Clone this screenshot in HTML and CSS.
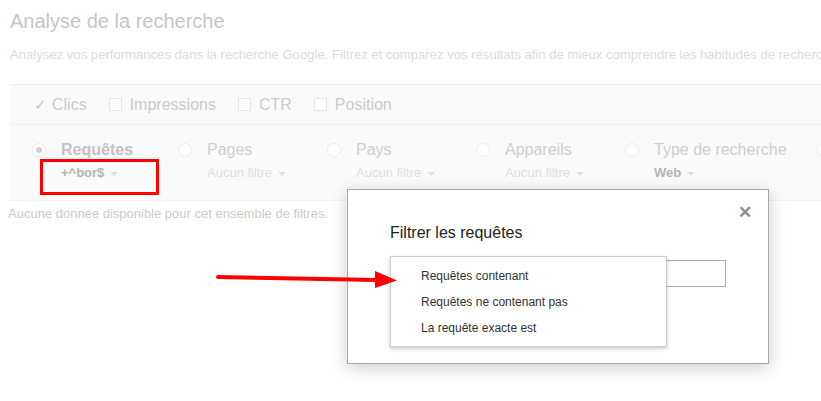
FILE: index.html
```html
<!DOCTYPE html>
<html lang="fr">
<head>
    <meta charset="UTF-8">
    <title>Analyse de la recherche</title>
    <link rel="stylesheet" href="styles.css">
</head>
<body>
    <div class="page">
        <h1>Analyse de la recherche</h1>
        <p class="desc">Analysez vos performances dans la recherche Google. Filtrez et comparez vos résultats afin de mieux comprendre les habitudes de recherche de vos utilisateurs.</p>

        <div class="metrics">
            <span class="metric"><span class="check">&#10003;</span>Clics</span>
            <span class="metric"><span class="box"></span>Impressions</span>
            <span class="metric"><span class="box"></span>CTR</span>
            <span class="metric"><span class="box"></span>Position</span>
        </div>

        <div class="dims">
            <div class="dim first">
                <span class="radio on"></span>
                <div>
                    <div class="dim-name bold">Requêtes</div>
                    <div class="dim-filter set">+^bor$ <span class="caret"></span></div>
                </div>
            </div>
            <div class="dim">
                <span class="radio"></span>
                <div>
                    <div class="dim-name">Pages</div>
                    <div class="dim-filter">Aucun filtre <span class="caret"></span></div>
                </div>
            </div>
            <div class="dim">
                <span class="radio"></span>
                <div>
                    <div class="dim-name">Pays</div>
                    <div class="dim-filter">Aucun filtre <span class="caret"></span></div>
                </div>
            </div>
            <div class="dim">
                <span class="radio"></span>
                <div>
                    <div class="dim-name">Appareils</div>
                    <div class="dim-filter">Aucun filtre <span class="caret"></span></div>
                </div>
            </div>
            <div class="dim">
                <span class="radio"></span>
                <div>
                    <div class="dim-name">Type de recherche</div>
                    <div class="dim-filter set">Web <span class="caret"></span></div>
                </div>
            </div>
            <div class="dim">
                <span class="radio"></span>
                <div>
                    <div class="dim-name">Dates</div>
                    <div class="dim-filter">Aucun filtre <span class="caret"></span></div>
                </div>
            </div>
        </div>

        <p class="empty">Aucune donnée disponible pour cet ensemble de filtres.</p>
    </div>

    <div class="dialog">
        <span class="close">&#10005;</span>
        <h2>Filtrer les requêtes</h2>
        <div class="field">
            <div class="input"></div>
            <ul class="menu">
                <li>Requêtes contenant</li>
                <li>Requêtes ne contenant pas</li>
                <li>La requête exacte est</li>
            </ul>
        </div>
    </div>

    <!-- annotation -->
    <div class="highlight"></div>
    <svg class="arrow" width="190" height="24" viewBox="0 0 190 24">
        <path d="M2 9 L162 12" stroke="#ff0000" stroke-width="4" stroke-linecap="round"/>
        <path d="M159 3 L181 12.5 L159 20 Z" fill="#ff0000"/>
    </svg>
</body>
</html>
```

FILE: styles.css
```css
body {
    margin: 0;
    font-family: "Liberation Sans", Arial, sans-serif;
    background: #fff;
    overflow: hidden;
}
.page {
    padding: 0 0 0 10px;
    white-space: nowrap;
}
h1 {
    margin: 9px 0 0 0;
    font-size: 20px;
    font-weight: normal;
    line-height: 24px;
    color: #c6c6c6;
}
.desc {
    margin: 14px 0 0 0;
    font-size: 13px;
    line-height: 16px;
    letter-spacing: 0.05px;
    color: #dcdcdc;
}
.metrics {
    margin-top: 21px;
    height: 39px;
    display: flex;
    align-items: center;
    gap: 22px;
    padding-left: 24px;
    background-color: #fafafa;
    border-top: 1px solid #f0f0f0;
    border-bottom: 1px solid #f0f0f0;
    font-size: 16px;
    color: #cbcbcb;
}
.metric {
    display: flex;
    align-items: center;
}
.check {
    font-size: 15px;
    margin-right: 5px;
    color: #c8c8c8;
}
.box {
    width: 11px;
    height: 11px;
    border: 1px solid #e6e6e6;
    background: #fff;
    margin-right: 8px;
}
.dims {
    display: flex;
    height: 75px;
    background-color: #fafafa;
    padding-left: 22px;
    border-bottom: 1px solid #f2f2f2;
}
.dim {
    flex: 0 0 auto;
    min-width: 149px;
    box-sizing: border-box;
    padding-right: 30px;
    display: flex;
    align-items: flex-start;
    gap: 15px;
    padding-top: 14px;
}
.dim.first {
    min-width: 146px;
}
.radio {
    width: 12px;
    height: 12px;
    border: 1px solid #ececec;
    border-radius: 50%;
    background: #fff;
    margin-top: 4px;
    position: relative;
    flex: none;
}
.radio.on::after {
    content: "";
    position: absolute;
    left: 3px;
    top: 3px;
    width: 6px;
    height: 6px;
    border-radius: 50%;
    background: #d0d0d0;
}
.dim-name {
    font-size: 16px;
    line-height: 20px;
    margin-top: 1px;
    color: #cfcfcf;
}
.dim-name.bold {
    font-weight: bold;
    color: #c2c2c2;
}
.dim-filter {
    margin-top: 5px;
    font-size: 13px;
    line-height: 16px;
    color: #dedede;
}
.dim-filter.set {
    font-weight: bold;
    color: #b4b4b4;
}
.caret {
    display: inline-block;
    width: 0;
    height: 0;
    border-left: 4px solid transparent;
    border-right: 4px solid transparent;
    border-top: 4px solid #e0e0e0;
    vertical-align: middle;
    margin-left: 2px;
}
.empty {
    margin: 5px 0 0 -2px;
    font-size: 13px;
    color: #cbcbcb;
}
.highlight {
    position: absolute;
    left: 40px;
    top: 159px;
    width: 113px;
    height: 30px;
    border: 3px solid #ff0000;
}
.arrow {
    position: absolute;
    left: 216px;
    top: 268px;
}
.dialog {
    position: absolute;
    left: 347px;
    top: 189px;
    width: 422px;
    height: 175px;
    background: #fff;
    border: 1px solid #a8a8a8;
    box-shadow: 0 4px 16px rgba(0, 0, 0, 0.2);
    padding: 0 0 0 42px;
    box-sizing: border-box;
}
.close {
    position: absolute;
    right: 16px;
    top: 12px;
    font-size: 17px;
    font-weight: bold;
    color: #8f8f8f;
}
h2 {
    margin: 33px 0 0 0;
    font-size: 16px;
    font-weight: normal;
    line-height: 20px;
    color: #222;
}
.field {
    position: relative;
    margin-top: 13px;
    padding-top: 4px;
}
.input {
    width: 336px;
    height: 27px;
    border: 1px solid #ababab;
    box-sizing: border-box;
}
.menu {
    position: absolute;
    left: 0;
    top: 0;
    width: 277px;
    height: 91px;
    margin: 0;
    padding: 6px 0 0 0;
    list-style: none;
    background: #fff;
    border: 1px solid #cfcfcf;
    box-shadow: 0 2px 4px rgba(0, 0, 0, 0.2);
    box-sizing: border-box;
}
.menu li {
    padding-left: 30px;
    font-size: 12px;
    line-height: 26px;
    height: 26px;
    color: #333;
}
```
